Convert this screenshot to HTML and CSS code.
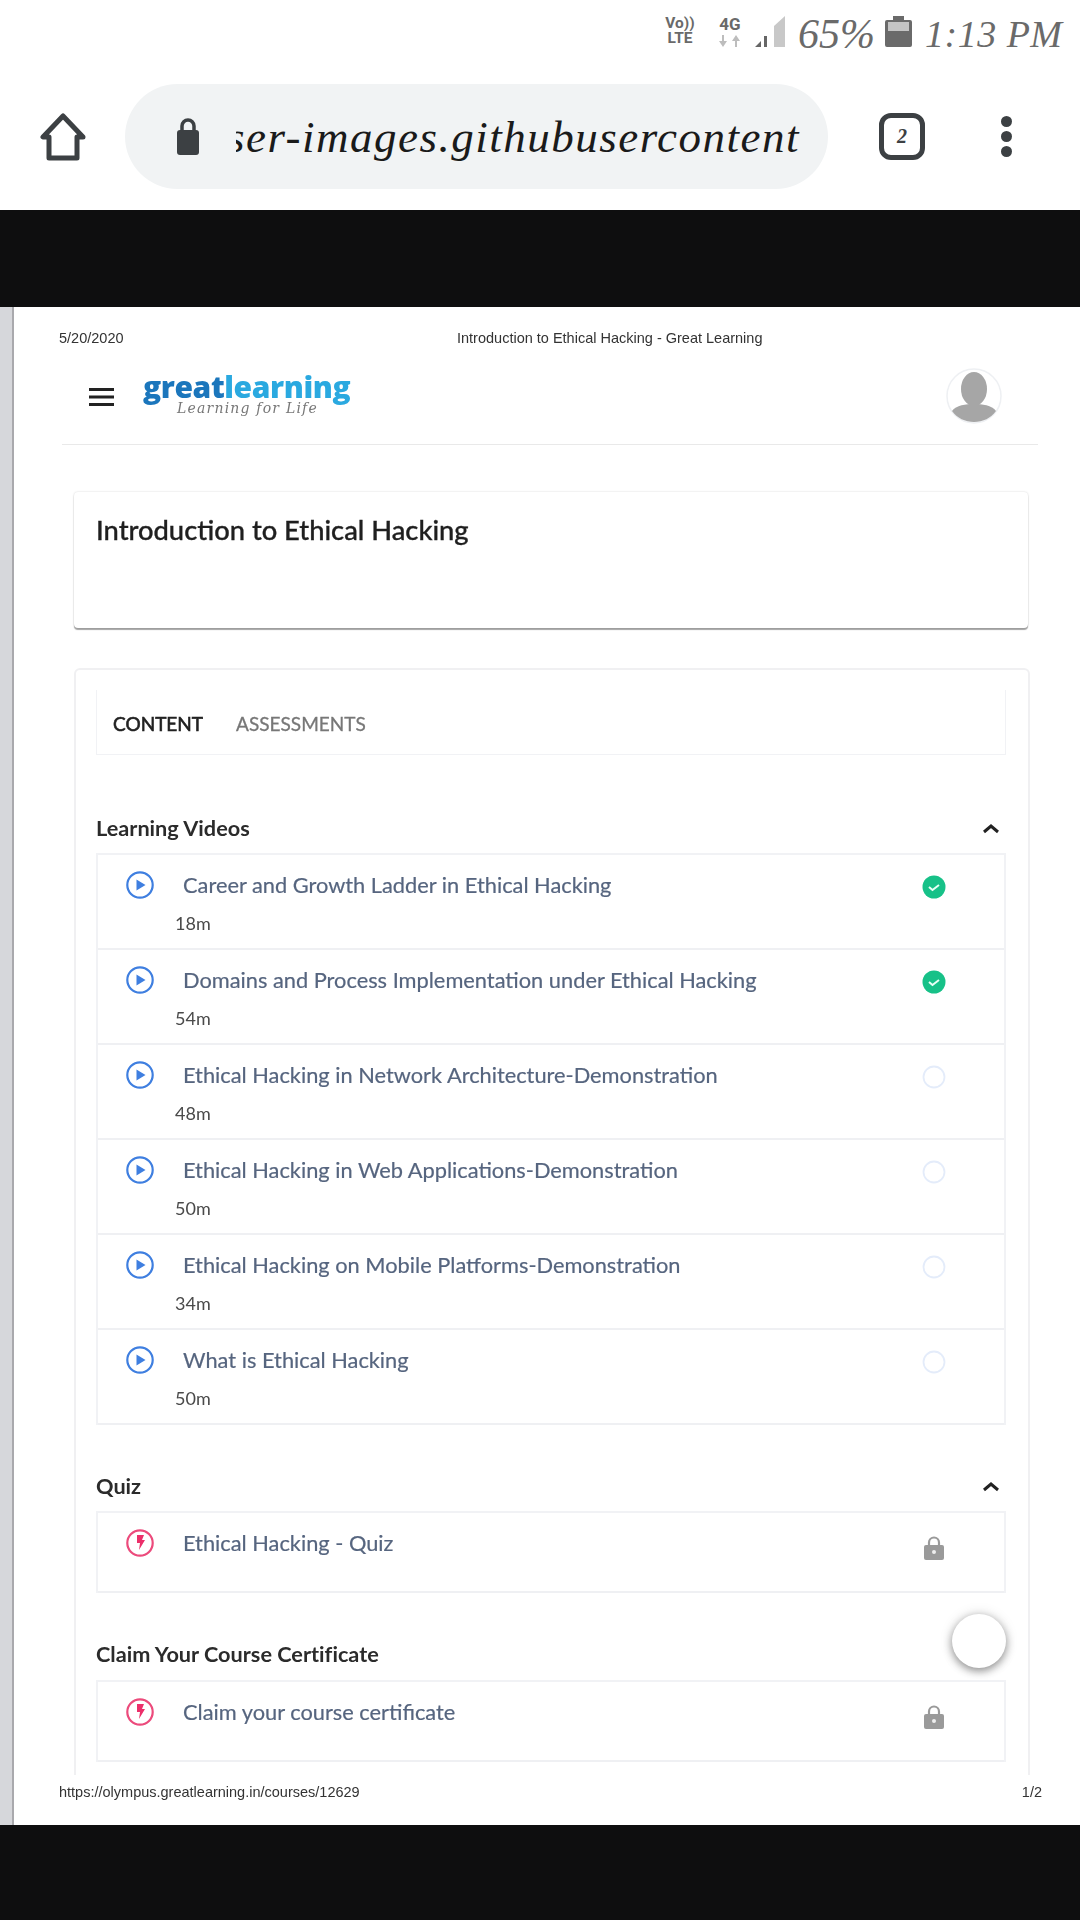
FILE: index.html
```html
<!DOCTYPE html>
<html lang="en">
<head>
<meta charset="utf-8">
<title>Introduction to Ethical Hacking</title>
<link rel="stylesheet" href="styles.css">
</head>
<body>
<div class="status">
  <div class="volte"><span>Vo))</span><span>LTE</span></div>
  <div class="net"><span>4G</span>
    <svg width="26" height="12" viewBox="0 0 26 12"><path d="M7 0v6h3l-4 6-4-6h3V0zM19 0l4 6h-3v6h-2V6h-3z" fill="#bdbdbd"/></svg>
  </div>
  <svg class="signal" width="30" height="31" viewBox="0 0 30 31"><path d="M0 31l6-6v6zM9 20h3v11H9z" fill="#666"/><path d="M19 10L30 0v31H19z" fill="#c8c8c8"/></svg>
  <span class="hand pct">65%</span>
  <svg class="batt" width="27" height="31" viewBox="0 0 27 31"><path d="M8 0h11v4h6a2 2 0 0 1 2 2v23a2 2 0 0 1-2 2H2a2 2 0 0 1-2-2V6a2 2 0 0 1 2-2h6z" fill="#6a6a6a"/><path d="M3 6h21v9H3z" fill="#c4c4c4"/></svg>
  <span class="hand time">1:13 PM</span>
</div>

<div class="toolbar">
  <svg class="home" width="46" height="48" viewBox="0 0 46 48"><path d="M23 3L3 24h6v21h28V24h6z" fill="none" stroke="#3c4043" stroke-width="5" stroke-linejoin="round"/></svg>
  <div class="pill">
    <svg class="lock" width="22" height="38" viewBox="0 0 22 38"><path d="M5 14V9a6 6 0 0 1 12 0v5" fill="none" stroke="#3c4043" stroke-width="3.5"/><rect y="13" width="22" height="25" rx="3" fill="#3c4043"/></svg>
    <div class="url"><span class="hand">user-images.githubusercontent</span></div>
  </div>
  <div class="tabs-btn">2</div>
  <div class="dots"><i></i><i></i><i></i></div>
</div>

<div class="bar-top"></div>

<div class="sheet">
  <div class="print-head"><span>5/20/2020</span><span class="print-title">Introduction to Ethical Hacking - Great Learning</span></div>
  <div class="nav">
    <svg class="burger" width="25" height="18" viewBox="0 0 25 18"><path d="M0 1.5h25M0 9h25M0 16.5h25" stroke="#222" stroke-width="3"/></svg>
    <div class="logo">
      <div class="logo-main"><span class="great">great</span><span class="learning">learning</span></div>
      <div class="logo-tag">Learning for Life</div>
    </div>
    <div class="avatar">
      <svg width="56" height="56" viewBox="0 0 56 56"><circle cx="28" cy="28" r="27" fill="#fff" stroke="#eef0f3" stroke-width="1.5"/><ellipse cx="28" cy="21" rx="13" ry="17" fill="#a6a6a6"/><path d="M6 43c4-6 14-7 22-7s18 1 22 7c-5 7-13 11-22 11S11 50 6 43z" fill="#a6a6a6"/></svg>
    </div>
  </div>

  <div class="course-card"><h1>Introduction to Ethical Hacking</h1></div>

  <div class="content-card">
    <div class="tabs"><span class="tab active">CONTENT</span><span class="tab">ASSESSMENTS</span></div>

    <div class="section-head first"><span>Learning Videos</span>
      <svg class="chev" width="18" height="11" viewBox="0 0 18 11"><path d="M2 9l7-6 7 6" fill="none" stroke="#222" stroke-width="3"/></svg></div>
    <div class="list">
      <div class="row"><svg class="ic" width="28" height="28" viewBox="0 0 28 28"><circle cx="14" cy="14" r="12.7" fill="none" stroke="#3f7fe0" stroke-width="2.2"/><path d="M10.5 8.5l9 5.5-9 5.500z" fill="#3f7fe0"/></svg><div class="title">Career and Growth Ladder in Ethical Hacking</div><svg class="st" width="24" height="24" viewBox="0 0 24 24"><circle cx="12" cy="12" r="11.500" fill="#17c188"/><path d="M7 12l3.500 3 6.500-5" fill="none" stroke="#e8fff5" stroke-width="2"/></svg><div class="dur">18m</div></div>
      <div class="row"><svg class="ic" width="28" height="28" viewBox="0 0 28 28"><circle cx="14" cy="14" r="12.7" fill="none" stroke="#3f7fe0" stroke-width="2.2"/><path d="M10.5 8.5l9 5.5-9 5.500z" fill="#3f7fe0"/></svg><div class="title">Domains and Process Implementation under Ethical Hacking</div><svg class="st" width="24" height="24" viewBox="0 0 24 24"><circle cx="12" cy="12" r="11.500" fill="#17c188"/><path d="M7 12l3.500 3 6.500-5" fill="none" stroke="#e8fff5" stroke-width="2"/></svg><div class="dur">54m</div></div>
      <div class="row"><svg class="ic" width="28" height="28" viewBox="0 0 28 28"><circle cx="14" cy="14" r="12.7" fill="none" stroke="#3f7fe0" stroke-width="2.2"/><path d="M10.5 8.5l9 5.5-9 5.500z" fill="#3f7fe0"/></svg><div class="title">Ethical Hacking in Network Architecture-Demonstration</div><svg class="st" width="24" height="24" viewBox="0 0 24 24"><circle cx="12" cy="12" r="10.500" fill="none" stroke="#e4ecfa" stroke-width="1.800"/></svg><div class="dur">48m</div></div>
      <div class="row"><svg class="ic" width="28" height="28" viewBox="0 0 28 28"><circle cx="14" cy="14" r="12.7" fill="none" stroke="#3f7fe0" stroke-width="2.2"/><path d="M10.5 8.5l9 5.5-9 5.500z" fill="#3f7fe0"/></svg><div class="title">Ethical Hacking in Web Applications-Demonstration</div><svg class="st" width="24" height="24" viewBox="0 0 24 24"><circle cx="12" cy="12" r="10.500" fill="none" stroke="#e4ecfa" stroke-width="1.800"/></svg><div class="dur">50m</div></div>
      <div class="row"><svg class="ic" width="28" height="28" viewBox="0 0 28 28"><circle cx="14" cy="14" r="12.7" fill="none" stroke="#3f7fe0" stroke-width="2.2"/><path d="M10.5 8.5l9 5.5-9 5.500z" fill="#3f7fe0"/></svg><div class="title">Ethical Hacking on Mobile Platforms-Demonstration</div><svg class="st" width="24" height="24" viewBox="0 0 24 24"><circle cx="12" cy="12" r="10.500" fill="none" stroke="#e4ecfa" stroke-width="1.800"/></svg><div class="dur">34m</div></div>
      <div class="row"><svg class="ic" width="28" height="28" viewBox="0 0 28 28"><circle cx="14" cy="14" r="12.7" fill="none" stroke="#3f7fe0" stroke-width="2.2"/><path d="M10.5 8.5l9 5.5-9 5.500z" fill="#3f7fe0"/></svg><div class="title">What is Ethical Hacking</div><svg class="st" width="24" height="24" viewBox="0 0 24 24"><circle cx="12" cy="12" r="10.500" fill="none" stroke="#e4ecfa" stroke-width="1.800"/></svg><div class="dur">50m</div></div>
    </div>

    <div class="section-head quiz"><span>Quiz</span>
      <svg class="chev" width="18" height="11" viewBox="0 0 18 11"><path d="M2 9l7-6 7 6" fill="none" stroke="#222" stroke-width="3"/></svg></div>
    <div class="list">
      <div class="row short"><svg class="ic" width="28" height="28" viewBox="0 0 28 28"><circle cx="14" cy="14" r="12.7" fill="none" stroke="#ec4b7c" stroke-width="2.2"/><path d="M11 6h7l-2 5h3l-6 10 1-7h-3z" fill="#ec2f6a"/></svg><div class="title">Ethical Hacking - Quiz</div><svg class="st lk" width="20" height="24" viewBox="0 0 20 24"><path d="M5 10V6.500a5 5 0 0 1 10 0V10" fill="none" stroke="#9a9a9a" stroke-width="2.200"/><rect y="9" width="20" height="15" rx="2" fill="#9a9a9a"/><circle cx="10" cy="16" r="2" fill="#eee"/></svg></div>
    </div>

    <div class="section-head claim"><span>Claim Your Course Certificate</span></div>
    <div class="list">
      <div class="row short"><svg class="ic" width="28" height="28" viewBox="0 0 28 28"><circle cx="14" cy="14" r="12.7" fill="none" stroke="#ec4b7c" stroke-width="2.2"/><path d="M11 6h7l-2 5h3l-6 10 1-7h-3z" fill="#ec2f6a"/></svg><div class="title">Claim your course certificate</div><svg class="st lk" width="20" height="24" viewBox="0 0 20 24"><path d="M5 10V6.500a5 5 0 0 1 10 0V10" fill="none" stroke="#9a9a9a" stroke-width="2.200"/><rect y="9" width="20" height="15" rx="2" fill="#9a9a9a"/><circle cx="10" cy="16" r="2" fill="#eee"/></svg></div>
    </div>
  </div>

  <div class="fab"></div>
  <div class="print-foot"><span>https://olympus.greatlearning.in/courses/12629</span><span>1/2</span></div>
</div>

<div class="bar-bottom"></div>
</body>
</html>
```
FILE: styles.css
```css
* { box-sizing: border-box; font-variant-ligatures: none; }
html, body { margin: 0; padding: 0; }
body { width: 1080px; height: 1920px; overflow: hidden; background: #fff; font-family: "Lato", "Noto Sans", sans-serif; display: flex; flex-direction: column; }

.hand { font-family: "Liberation Serif", serif; font-style: italic; }

.status { height: 70px; padding: 16px 20px 0 0; display: flex; justify-content: flex-end; align-items: flex-start; color: #6a6a6a; flex: none; }
.volte { width: 34px; margin-right: 19px; display: flex; flex-direction: column; font: 700 15.500px/15px "Roboto", sans-serif; align-items: center; }
.net { width: 28px; margin-right: 11px; display: flex; flex-direction: column; align-items: center; gap: 2px; font: 700 17px/17px "Roboto", sans-serif; }
.signal { margin-right: 13px; }
.pct { font-size: 42px; line-height: 36px; width: 80px; margin-right: 7px; }
.batt { margin-right: 13px; }
.time { font-size: 38px; line-height: 36px; letter-spacing: 0.5px; white-space: nowrap; width: 135px; }

.toolbar { height: 140px; flex: none; display: flex; align-items: center; padding: 0 0 7px 40px; }
.home { flex: none; margin: 0 39px 0 0; }
.pill { width: 703px; height: 105px; border-radius: 53px; background: #f1f3f4; display: flex; align-items: center; padding: 0 28px 0 52px; flex: none; }
.lock { flex: none; margin-right: 37px; position: relative; top: -1px; }
.url { flex: 1; overflow: hidden; display: flex; justify-content: flex-end; color: #1a1a1a; font-size: 45px; line-height: 60px; white-space: nowrap; }
.url span { flex: none; letter-spacing: 1.500px; }
.tabs-btn { width: 46px; height: 47px; margin-left: 51px; border: 5px solid #3c4043; border-radius: 12px; color: #3c4043; font: italic 700 20px/36px "Liberation Serif", serif; text-align: center; flex: none; }
.dots { margin-left: 76px; display: flex; flex-direction: column; gap: 4px; flex: none; }
.dots i { display: block; width: 11px; height: 11px; border-radius: 50%; background: #3c4043; }

.bar-top { height: 97px; background: #0e0e0f; flex: none; }
.bar-bottom { height: 95px; background: #0e0e0f; flex: none; }

.sheet { height: 1518px; flex: none; position: relative; padding-left: 12px; filter: blur(0.45px); background: #fff; }
.sheet::before { content: ""; position: absolute; left: 0; top: 0; width: 12px; height: 100%; background: #d6d7db; border-right: 2px solid #a9a9ad; }

.print-head { position: relative; height: 53px; padding: 21px 0 0 47px; font: 14.5px/20px "Liberation Sans", sans-serif; color: #333; }
.print-title { position: absolute; left: 445px; top: 21px; white-space: nowrap; }

.nav { margin: 0 42px 0 50px; height: 85px; border-bottom: 1.500px solid #e9e9e9; display: flex; align-items: flex-start; }
.burger { margin: 28px 29px 0 27px; flex: none; }
.logo { flex: none; padding-top: 13px; }
.logo-main { font: 800 30px/28px "Open Sans", "Lato", sans-serif; letter-spacing: -0.4px; white-space: nowrap; }
.great { color: #1b76bc; }
.learning { color: #2aa9e0; }
.logo-tag { font: italic 400 14px/14px "DejaVu Serif", serif; color: #777; letter-spacing: 1.200px; margin: 0 0 0 34px; white-space: nowrap; }
.avatar { margin: 8px 36px 0 auto; flex: none; height: 56px; }

.course-card { margin: 47px 52px 0 62px; height: 136px; border-radius: 4px; background: #fff; box-shadow: 0 0 2px rgba(0,0,0,.18), 0 2px 1px rgba(0,0,0,.35); padding: 18px 22px; }
.course-card h1 { margin: 0; font: 500 27.3px/40px "Lato", sans-serif; color: #1f1f1f; -webkit-text-stroke: 0.35px #1f1f1f; }

.content-card { margin: 40px 50px 0 62px; height: 1107px; overflow: hidden; border: 2px solid #f0f0f2; border-bottom: 0; border-radius: 6px 6px 0 0; padding: 20px 22px 0 20px; background: #fff; }
.tabs { height: 65px; border: 1.500px solid #f1f2f5; border-top: 0; display: flex; align-items: center; padding: 4px 0 0 16px; gap: 33px; font: 400 19px/24px "Lato", sans-serif; }
.tab { color: #777; -webkit-text-stroke: 0.3px #777; }
.tab.active { color: #222; -webkit-text-stroke: 0.6px #222; }

.section-head { display: flex; justify-content: space-between; align-items: center; font: 700 21.700px/28px "Lato", sans-serif; color: #2b2b2b; padding-right: 6px; }
.section-head.first { margin-top: 59px; height: 28px; margin-bottom: 11px; }
.section-head.quiz { margin-top: 47px; height: 28px; margin-bottom: 11px; }
.section-head.claim { margin-top: 47px; height: 28px; margin-bottom: 12px; }

.list { border: 2px solid #f1f2f5; border-bottom: 0; }
.row { height: 95px; border-bottom: 2px solid #eff0f3; display: grid; grid-template-columns: 77px 1fr 40px 50px; grid-template-rows: 58px 1fr; align-items: center; }
.row.short { height: 80px; }
.ic { grid-column: 1; grid-row: 1; justify-self: end; margin-right: 21px; position: relative; top: 1px; }
.title { grid-column: 2; grid-row: 1; font: 400 21.800px/28px "Lato", sans-serif; color: #56657f; -webkit-text-stroke: 0.2px #56657f; white-space: nowrap; padding: 2px 0 0 8px; }
.st { grid-column: 3; grid-row: 1; justify-self: center; position: relative; top: 3px; }
.st.lk { top: 6px; }
.dur { grid-column: 2; grid-row: 2; font: 400 18px/24px "Lato", sans-serif; color: #4a4a4a; align-self: start; margin-top: -2px; }

.fab { position: absolute; left: 952px; top: 1307px; width: 54px; height: 54px; border-radius: 50%; background: #fff; box-shadow: 0 3px 8px rgba(0,0,0,.4), 0 0 14px rgba(0,0,0,.12); }

.print-foot { margin: 7px 0 0 47px; padding-right: 38px; display: flex; justify-content: space-between; font: 14.5px/20px "Liberation Sans", sans-serif; color: #333; }
```
